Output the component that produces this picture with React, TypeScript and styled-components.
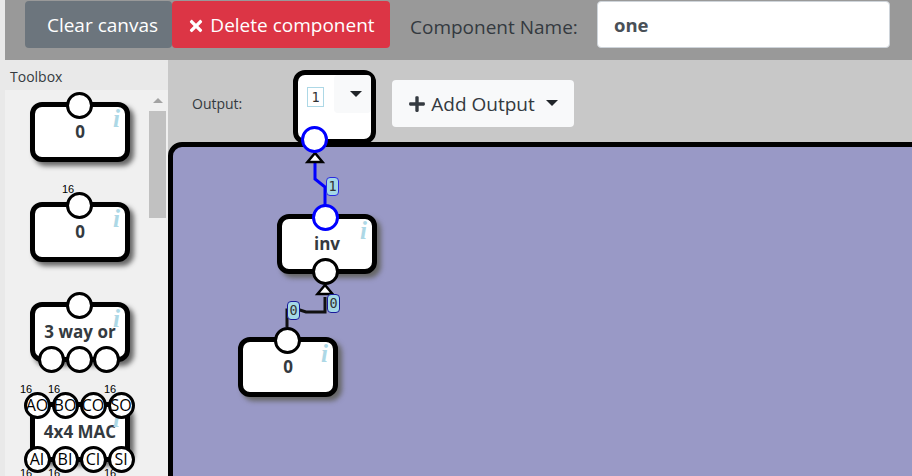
import React from 'react'
import styled, { createGlobalStyle } from 'styled-components'
import { FaPlus, FaTimes } from 'react-icons/fa'

const SANS = '"Open Sans", "Noto Sans", sans-serif'

interface PinDef {
  x: number
  y: number
  text?: string
  width?: string
  widthBelow?: boolean
  blue?: boolean
}

interface NodeProps {
  name: string
  pins: PinDef[]
}

const NodeBody = ({ name, pins }: NodeProps) => (
  <>
    <NodeName>{name}</NodeName>
    <InfoMark>i</InfoMark>
    {pins.map((p, i) => (
      <React.Fragment key={i}>
        {p.width && (
          <PinWidth $x={p.x} $y={p.y} $below={!!p.widthBelow}>
            {p.width}
          </PinWidth>
        )}
        <Pin $x={p.x} $y={p.y} $blue={!!p.blue}>
          {p.text}
        </Pin>
      </React.Fragment>
    ))}
  </>
)

const TOOLS: NodeProps[] = [
  { name: '0', pins: [{ x: 49, y: 3 }] },
  { name: '0', pins: [{ x: 49, y: 3, width: '16' }] },
  {
    name: '3 way or',
    pins: [{ x: 49, y: 3 }, { x: 21, y: 57 }, { x: 49, y: 57 }, { x: 76, y: 57 }],
  },
  {
    name: '4x4 MAC',
    pins: [
      { x: 7, y: 3, text: 'AO', width: '16' },
      { x: 35, y: 3, text: 'BO', width: '16' },
      { x: 63, y: 3, text: 'CO' },
      { x: 91, y: 3, text: 'SO', width: '16' },
      { x: 7, y: 57, text: 'AI', width: '16', widthBelow: true },
      { x: 35, y: 57, text: 'BI', width: '16', widthBelow: true },
      { x: 63, y: 57, text: 'CI' },
      { x: 91, y: 57, text: 'SI', width: '16', widthBelow: true },
    ],
  },
]

const App = () => (
  <Page>
    <GlobalStyle />
    <TopBar>
      <ClearButton>Clear canvas</ClearButton>
      <DeleteButton>
        <FaTimes size={18} /> Delete component
      </DeleteButton>
      <NameLabel>Component Name:</NameLabel>
      <NameInput defaultValue="one" />
    </TopBar>
    <Body>
      <Toolbox>
        <ToolboxTitle>Toolbox</ToolboxTitle>
        <ToolList>
          <ToolItems>
            {TOOLS.map((t, i) => (
              <ToolNode key={i}>
                <NodeBody {...t} />
              </ToolNode>
            ))}
          </ToolItems>
          <ScrollTrack>
            <ScrollArrow />
            <ScrollThumb />
          </ScrollTrack>
        </ToolList>
      </Toolbox>
      <Main>
        <OutputRow>
          <OutputLabel>Output:</OutputLabel>
          <OutputNode>
            <OutputValue>1</OutputValue>
            <OutputCaret>
              <Caret />
            </OutputCaret>
            <Pin $x={21} $y={69} $blue />
          </OutputNode>
          <AddOutput>
            <FaPlus size={18} /> Add Output <Caret />
          </AddOutput>
        </OutputRow>
        <Canvas>
          <Wires width="739" height="329">
            <polyline points="142,15 142,32 152,40 152,60" fill="none" stroke="#0000ff" strokeWidth="3" />
            <polygon points="142,6 134.5,15 149.5,15" fill="#fff" stroke="#000" strokeWidth="2.5" />
            <polyline points="114,180 114,163 127,163 133,165 137,165 152,165 152,150" fill="none" stroke="#111" strokeWidth="3" />
            <polygon points="152,138 144.5,147 159.5,147" fill="#fff" stroke="#000" strokeWidth="2.5" />
          </Wires>
          <CanvasNode $x={104} $y={67}>
            <NodeBody name="inv" pins={[{ x: 48, y: 3, blue: true }, { x: 48, y: 57 }]} />
          </CanvasNode>
          <CanvasNode $x={65} $y={190}>
            <NodeBody name="0" pins={[{ x: 49, y: 3 }]} />
          </CanvasNode>
          <WireLabel $x={153} $y={30} $blue>1</WireLabel>
          <WireLabel $x={114} $y={154}>0</WireLabel>
          <WireLabel $x={154} $y={147}>0</WireLabel>
        </Canvas>
      </Main>
    </Body>
  </Page>
)

export default App

const GlobalStyle = createGlobalStyle`
  html, body {
    margin: 0;
    overflow: hidden;
    background: #e9e9e9;
  }
  * {
    box-sizing: border-box;
  }
`

const Page = styled('div')`
  display: flex;
  flex-direction: column;
  height: 476px;
  overflow: hidden;
  font-family: ${SANS};
  color: #212529;
`

const TopBar = styled('div')`
  display: flex;
  flex: none;
  align-items: flex-start;
  height: 60px;
  margin-left: 5px;
  padding: 1px 0 0 20px;
  background: #999;
`

const BaseButton = styled('button')`
  height: 47px;
  border: none;
  border-radius: 4px;
  color: #fff;
  font-family: ${SANS};
  font-size: 19px;
  white-space: nowrap;
`

const ClearButton = styled(BaseButton)`
  width: 147px;
  padding: 0 0 0 8px;
  background: #6c757d;
`

const DeleteButton = styled(BaseButton)`
  width: 218px;
  padding: 0;
  background: #dc3545;

  svg {
    vertical-align: -3px;
  }
`

const NameLabel = styled('div')`
  width: 187px;
  margin-left: 20px;
  line-height: 52px;
  font-size: 19px;
  color: #343a40;
  white-space: nowrap;
`

const NameInput = styled('input')`
  width: 293px;
  height: 47px;
  padding: 0 16px;
  border: 1px solid #ced4da;
  border-radius: 4px;
  background: #fff;
  color: #495057;
  font-family: ${SANS};
  font-size: 18.5px;
  font-weight: 700;
`

const Body = styled('div')`
  display: flex;
  flex: 1;
  min-height: 0;
`

const Toolbox = styled('div')`
  display: flex;
  flex: none;
  flex-direction: column;
  width: 168px;
  padding-left: 5px;
  background: #e9e9e9;
`

const ToolboxTitle = styled('div')`
  flex: none;
  height: 30px;
  padding: 8px 0 0 5px;
  font-size: 14px;
  line-height: 18px;
  color: #343a40;
`

const ToolList = styled('div')`
  display: flex;
  flex: 1;
  min-height: 0;
  overflow: hidden;
  background: #f0f0f0;
`

const ToolItems = styled('div')`
  display: flex;
  flex: 1;
  flex-direction: column;
  gap: 40px;
  padding: 12px 0 0 25px;
`

const ScrollTrack = styled('div')`
  display: flex;
  flex: none;
  flex-direction: column;
  align-items: center;
  width: 17px;
  margin-right: 2px;
  padding-top: 8px;
`

const ScrollArrow = styled('div')`
  width: 0;
  height: 0;
  margin-bottom: 8px;
  border-right: 5px solid transparent;
  border-bottom: 5px solid #a3a3a3;
  border-left: 5px solid transparent;
`

const ScrollThumb = styled('div')`
  width: 17px;
  height: 107px;
  background: #c1c1c1;
`

const NodeBox = styled('div')`
  width: 100px;
  height: 60px;
  border: 5px solid #000;
  border-radius: 12px;
  background: #fff;
  box-shadow: 4px 4px 5px #666;
`

const ToolNode = styled(NodeBox)`
  position: relative;
  flex: none;
`

const CanvasNode = styled(NodeBox)<{ $x: number; $y: number }>`
  position: absolute;
  left: ${(p) => p.$x}px;
  top: ${(p) => p.$y}px;
`

const NodeName = styled('div')`
  margin-top: 15px;
  text-align: center;
  font-size: 17px;
  font-weight: 700;
  line-height: 20px;
  color: #343a40;
  white-space: nowrap;
`

const InfoMark = styled('span')`
  position: absolute;
  top: 0;
  right: 5px;
  color: #add8e6;
  font-family: 'Liberation Serif', serif;
  font-size: 25px;
  font-style: italic;
  font-weight: 700;
  line-height: 24px;
`

// x and y are the pin's centre, measured from the node's outer corner
const Pin = styled('div')<{ $x: number; $y: number; $blue?: boolean }>`
  position: absolute;
  left: ${(p) => p.$x - 5}px;
  top: ${(p) => p.$y - 5}px;
  display: flex;
  align-items: center;
  justify-content: center;
  width: 27px;
  height: 27px;
  margin: -13.5px 0 0 -13.5px;
  border: 3px solid ${(p) => (p.$blue ? '#0000ff' : '#000')};
  border-radius: 50%;
  background: #fff;
  color: #000;
  font-family: ${SANS};
  font-size: 16px;
  line-height: 1;
`

const PinWidth = styled('span')<{ $x: number; $y: number; $below: boolean }>`
  position: absolute;
  left: ${(p) => p.$x - 22}px;
  top: ${(p) => (p.$below ? p.$y + 3 : p.$y - 27)}px;
  color: #000;
  font-family: 'Liberation Sans', sans-serif;
  font-size: 11px;
  line-height: 12px;
`

const Main = styled('div')`
  display: flex;
  flex: 1;
  flex-direction: column;
  min-width: 0;
  background: #c8c8c8;
`

const OutputRow = styled('div')`
  position: relative;
  z-index: 1;
  display: flex;
  flex: none;
  align-items: flex-start;
  height: 82px;
  padding: 10px 0 0 24px;
`

const OutputLabel = styled('div')`
  width: 102px;
  margin-top: 24px;
  font-size: 14px;
  line-height: 20px;
  color: #343a40;
`

const OutputNode = styled('div')`
  position: relative;
  display: flex;
  flex: none;
  align-items: flex-start;
  width: 83px;
  height: 74px;
  margin-left: -1px;
  padding-left: 9px;
  border: 5px solid #000;
  border-radius: 12px;
  background: #fff;
`

const OutputValue = styled('div')`
  width: 17px;
  height: 20px;
  margin-top: 12px;
  border: 1px solid #add8e6;
  color: #333;
  font-family: 'DejaVu Sans Mono', monospace;
  font-size: 13.5px;
  line-height: 18px;
  text-align: center;
`

const OutputCaret = styled('div')`
  display: flex;
  justify-content: center;
  width: 37px;
  height: 38px;
  margin-left: 10px;
  padding-top: 16px;
  border-radius: 4px;
  background: #f8f9fa;
`

const Caret = styled('span')`
  display: inline-block;
  width: 0;
  height: 0;
  margin-left: 6px;
  vertical-align: 5px;
  border-top: 6px solid #212529;
  border-right: 6px solid transparent;
  border-left: 6px solid transparent;
`

const AddOutput = styled('button')`
  flex: none;
  width: 182px;
  height: 47px;
  margin: 10px 0 0 16px;
  padding: 0;
  border: none;
  border-radius: 4px;
  background: #f8f9fa;
  color: #343a40;
  font-family: ${SANS};
  font-size: 19px;
  white-space: nowrap;

  svg {
    vertical-align: -2px;
  }
`

const Canvas = styled('div')`
  position: relative;
  flex: none;
  width: 760px;
  height: 360px;
  border: 5px solid #000;
  border-radius: 14px;
  background: #9999c6;
`

const Wires = styled('svg')`
  position: absolute;
  left: 0;
  top: 0;
`

const WireLabel = styled('div')<{ $x: number; $y: number; $blue?: boolean }>`
  position: absolute;
  z-index: 1;
  left: ${(p) => p.$x}px;
  top: ${(p) => p.$y}px;
  width: 13px;
  height: 19px;
  border: 1px solid ${(p) => (p.$blue ? '#2a2ae0' : '#1a1a9a')};
  border-radius: 4px;
  background: #a4d8e6;
  color: #333;
  font-family: 'DejaVu Sans Mono', monospace;
  font-size: 13.5px;
  line-height: 17px;
  text-align: center;
`
